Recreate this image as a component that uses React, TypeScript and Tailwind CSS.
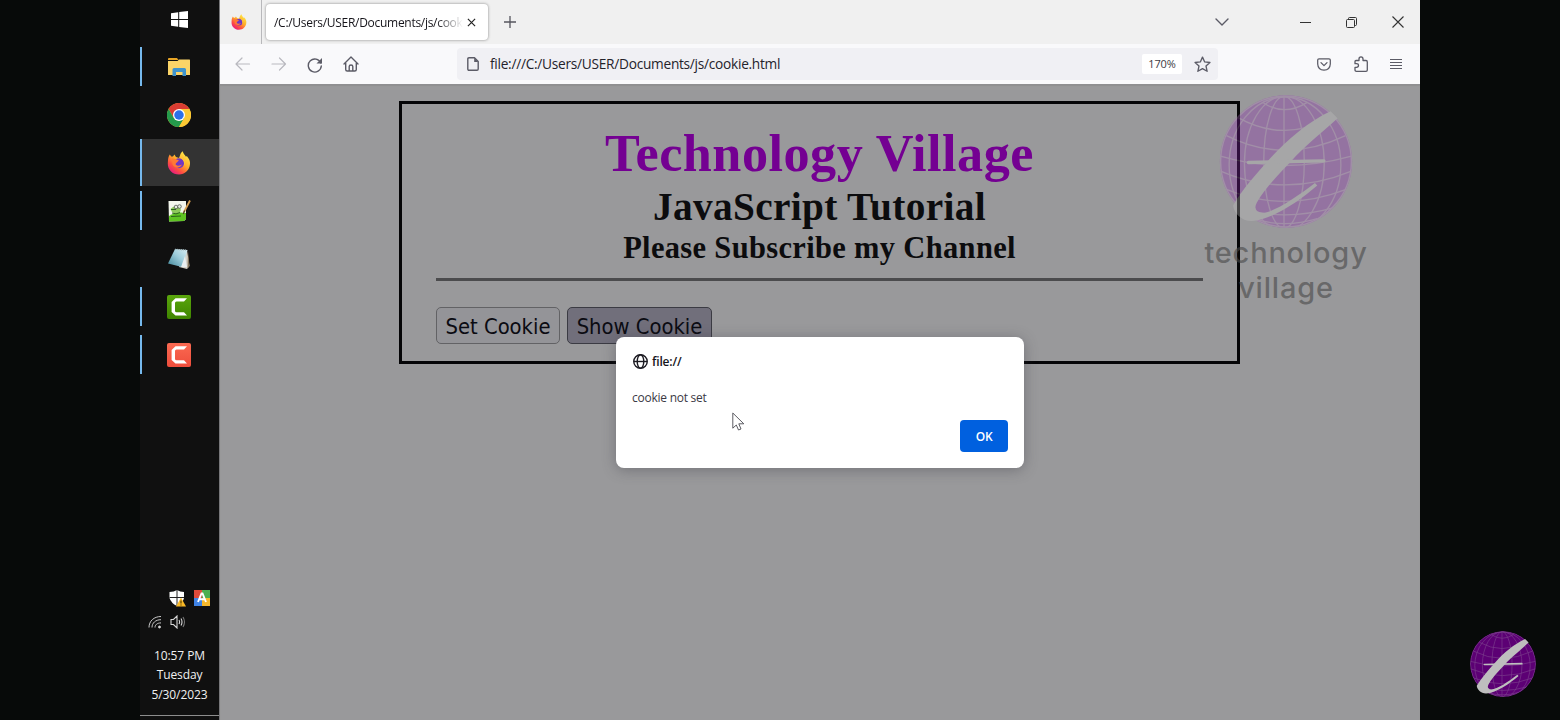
import React from "react";

type P = { className?: string };

function Globe({ className = "", fill, line, mark, o = 1 }: { className?: string; fill: string; line: string; mark: string; o?: number }) {
  const id = "globe" + fill.slice(1);
  return (
    <svg viewBox="11 6 400 400" className={className} style={{ opacity: o }}>
      <clipPath id={id}>
        <circle cx="211" cy="206" r="199" />
      </clipPath>
      <circle cx="211" cy="206" r="199" fill={fill} />
      <g clipPath={`url(#${id})`} fill="none" stroke={line} strokeWidth="4">
        <circle cx="211" cy="206" r="197" strokeWidth="5" />
        <path d="M205 8V404" />
        <ellipse cx="205" cy="208" rx="61" ry="198" />
        <ellipse cx="206" cy="212" rx="120" ry="202" />
        <ellipse cx="208" cy="216" rx="168" ry="204" />
        <path d="M140 28Q205 72 275 28M68 75Q205 150 345 75M32 128Q205 216 390 128M14 190Q205 246 408 190M14 235Q205 318 408 235M32 290Q205 362 392 290M68 345Q205 388 355 345M115 378Q205 408 305 378" />
      </g>
      <path fill={mark} d="M345 55C280 85 215 140 165 195C120 245 80 290 52 338C54 360 76 385 108 385C175 378 250 325 305 278L298 271C245 312 175 360 140 360C118 359 115 345 123 330C155 275 200 235 240 190C285 145 330 110 366 76Z" />
      <path d="M98 209L325 204" stroke={mark} strokeWidth="10" strokeLinecap="round" />
    </svg>
  );
}

function Firefox({ className = "" }: P) {
  return (
    <svg viewBox="0 0 24 24" className={className}>
      <defs>
        <linearGradient id="ff" x1="0.85" y1="0.1" x2="0.2" y2="1">
          <stop offset="0" stopColor="#ffe94a" />
          <stop offset=".4" stopColor="#ffae2a" />
          <stop offset=".7" stopColor="#ff5040" />
          <stop offset="1" stopColor="#e2138a" />
        </linearGradient>
      </defs>
      <path fill="url(#ff)" d="M1 9C1.200 6.500 2 5 2.800 3.600L4.200 5.600L6 5.600L7.400 3.600L9 6L12 7L13 4.500C13.300 2.500 14.500 1 15.800.2C16 2.500 18 3.800 18.800 5.600L20 5.200C22.200 7.800 23.300 10 23 13C22.600 19.300 17.800 23.500 12 23.500C5.500 23.500.5 18.500.8 12.200Z" />
      <circle cx="12" cy="12.200" r="5" fill="#7038c4" />
      <path d="M5 7.500L8.500 8L12 9.500C10.500 11.300 8.700 11.500 8.600 13.200C9.500 15 12.500 15.200 15 13.600C13.500 17.500 7.500 17.800 5.600 13.500Z" fill="#ff7a35" />
      <path d="M13 7C16.500 8 18 11.500 16.800 15C20 11 18 7 15 5.500Z" fill="#ffc23a" />
    </svg>
  );
}

function Windows() {
  return (
    <svg viewBox="0 0 17 17" className="h-[17px] w-[17px]" fill="#fff">
      <path d="M0 2.300L7.200 1.300V8H0ZM8.200 1.100L17 0V8H8.200ZM0 9H7.200V15.700L0 14.700ZM8.200 9H17V17L8.200 15.900Z" />
    </svg>
  );
}

function Explorer() {
  return (
    <svg viewBox="0 0 22 18" className="h-[18px] w-[22px]">
      <path d="M0 1Q0 0 1 0H9L10.500 2H0Z" fill="#e8a526" />
      <path d="M0 3H9.500L11 1.500H21.500Q22 1.500 22 2.500V17H0Z" fill="#fbd468" />
      <path d="M4.500 18V11.500Q4.500 10 6 10H16.500Q18 10 18 11.500V18H14.500V14H8V18Z" fill="#3f93cc" />
    </svg>
  );
}

function Chrome() {
  return (
    <svg viewBox="0 0 48 48" className="h-6 w-6">
      <circle cx="24" cy="24" r="24" fill="#fcc934" />
      <path d="M3.200 12A24 24 0 0 1 44.800 12H24L13.600 30Z" fill="#d93c32" />
      <path d="M3.200 12L13.600 30L34.400 30L24 48A24 24 0 0 1 3.200 12Z" fill="#249a4b" />
      <path d="M24 12H44.800A24 24 0 0 1 24 48L34.400 30Z" fill="#fcc934" />
      <circle cx="24" cy="24" r="12" fill="#fff" />
      <circle cx="24" cy="24" r="9.500" fill="#2c70e8" />
    </svg>
  );
}

function NotepadPlus() {
  return (
    <svg viewBox="0 0 24 24" className="h-6 w-6">
      <path d="M1.500 2H19V20L17 22L2 22.500Z" fill="#f3f6ec" />
      <path d="M2 17Q9 12 19 14V20L17 22L2 22.500Z" fill="#5fc423" />
      <path d="M3.500 10Q7 6 12 8Q15 10 13 13Q9 16 5 13Z" fill="#8dc95b" />
      <path d="M4 10.500H9M5 14Q9 16 13 13.500M4 17.500L14 17" stroke="#2c611b" strokeWidth="1" fill="none" />
      <circle cx="9" cy="8" r="1.800" fill="#e4eede" stroke="#555" strokeWidth=".8" />
      <circle cx="12.500" cy="7.500" r="1.800" fill="#e4eede" stroke="#555" strokeWidth=".8" />
      <path d="M23 1.500L17 13" stroke="#d7a052" strokeWidth="1.800" />
      <path d="M17.600 11.500L16.300 15" stroke="#4c3b25" strokeWidth="1.200" />
    </svg>
  );
}

function Notepad() {
  return (
    <svg viewBox="0 0 24 24" className="h-6 w-6">
      <defs>
        <linearGradient id="np" x1="0" y1="1" x2="1" y2="0">
          <stop offset="0" stopColor="#3e8497" />
          <stop offset=".55" stopColor="#9dcddb" />
          <stop offset="1" stopColor="#d9eef2" />
        </linearGradient>
      </defs>
      <path d="M20 3L22.500 19L20 22L12 20Z" fill="#d6d2c8" />
      <path d="M21 4L22.500 19L20.500 21.500Z" fill="#84745b" />
      <path d="M8 2L20.500 3L15 20L1 16.500Z" fill="url(#np)" />
      <path d="M18 9L20 20L14 20Z" fill="#e9eff0" />
      <path d="M8 2.300L20 3.200" stroke="#a4b8bd" strokeWidth="1.300" strokeDasharray="1 1" />
    </svg>
  );
}

function Camtasia({ top, bottom, id }: { top: string; bottom: string; id: string }) {
  return (
    <svg viewBox="0 0 24 24" className="h-6 w-6">
      <defs>
        <linearGradient id={id} x2="0" y2="1">
          <stop stopColor={top} />
          <stop offset="1" stopColor={bottom} />
        </linearGradient>
      </defs>
      <rect width="24" height="24" rx="2" fill={`url(#${id})`} />
      <path d="M20 3.300L17 6.500H9.500Q8 6.500 8 8V15.800Q8 17.300 9.500 17.300H17L20 20.500H8.500L4.600 17V7L8.500 3.300Z" fill="#fff" />
    </svg>
  );
}

function TaskItem({ children, bar, active }: { children: React.ReactNode; bar?: boolean; active?: boolean }) {
  return (
    <div className="h-12 shrink-0">
      <div className={`flex h-[47px] items-center ${active ? "bg-[#333333]" : ""}`}>
        <div className={`w-[2px] shrink-0 ${active ? "h-[47px]" : "h-[39px]"} ${bar ? "bg-[#76b9ed]" : ""}`} />
        <div className="flex flex-1 justify-center pr-[3px]">{children}</div>
      </div>
    </div>
  );
}

function Taskbar() {
  return (
    <aside className="flex h-full w-[79px] flex-col bg-[#101010]">
      <div className="flex h-[43px] shrink-0 items-center justify-center pb-[4px]">
        <Windows />
      </div>
      <TaskItem bar><Explorer /></TaskItem>
      <TaskItem><Chrome /></TaskItem>
      <TaskItem bar active><Firefox className="h-6 w-6" /></TaskItem>
      <TaskItem bar><NotepadPlus /></TaskItem>
      <TaskItem><Notepad /></TaskItem>
      <TaskItem bar><Camtasia id="cg" top="#5aa60c" bottom="#3f8500" /></TaskItem>
      <TaskItem bar><Camtasia id="cr" top="#fb6a52" bottom="#ee4d3c" /></TaskItem>
      <div className="flex-1" />
      <div className="flex justify-end gap-2 pr-[9px]">
        <svg viewBox="0 0 17 17" className="h-[17px] w-[17px]">
          <path d="M8 0Q11 2 15 2V8Q14 13 8 16Q2 13 .5 8V2Q5 2 8 0Z" fill="#fff" />
          <path d="M8 0V16M.5 7.500H15" stroke="#222" strokeWidth="1" />
          <path d="M12 7.500L17 16.500H7Z" fill="#f8b826" />
          <path d="M12 10.500V13.500M12 14.500V15.500" stroke="#4a3500" strokeWidth="1.100" />
        </svg>
        <svg viewBox="0 0 16 16" className="h-4 w-4">
          <path d="M0 0H8V8H0Z" fill="#de4b3b" />
          <path d="M8 0H16V8H8Z" fill="#4caf50" />
          <path d="M0 8H8V16H0Z" fill="#3f83e6" />
          <path d="M8 8H16V16H8Z" fill="#f5b82c" />
          <path d="M4 12L7.500 3.500H8.500L12 12M5.300 9.300H10.700" stroke="#fff" strokeWidth="1.900" fill="none" />
        </svg>
      </div>
      <div className="mt-[8px] flex gap-[8px] pl-2">
        <svg viewBox="0 0 14 14" className="h-[14px] w-[14px]" fill="none" stroke="#c8c8c8" strokeWidth="1">
          <path d="M1 12.500C1 6 6 1.500 13 1.500M4 12.500C4 8 7.500 4.700 13 4.700M7 12.500C7 10 9 7.900 13 7.900" />
          <circle cx="11.500" cy="12" r="1" fill="#fff" />
        </svg>
        <svg viewBox="0 0 16 14" className="h-[14px] w-4" fill="none" stroke="#d8d8d8" strokeWidth="1.100">
          <path d="M1 4.500H3.500L7 1V13L3.500 9.500H1ZM9 5Q10.200 7 9 9M11 3.500Q13 7 11 10.500" />
          <path d="M13 2Q16 7 13 12" stroke="#777" />
        </svg>
      </div>
      <div className="mt-[17px] text-center font-['Open_Sans','Noto_Sans',sans-serif] text-[12px] leading-[19.5px] tracking-[-0.1px] text-[#f0f0f0]">
        <div>10:57 PM</div>
        <div>Tuesday</div>
        <div>5/30/2023</div>
      </div>
      <div className="mt-[11px] h-[2px] shrink-0 border-t border-[#8d8d8d]" />
      <div className="h-[3px] shrink-0" />
    </aside>
  );
}

const stroke = { fill: "none", stroke: "#5b5b66", strokeWidth: 1.4, strokeLinecap: "round", strokeLinejoin: "round" } as const;

function TabStrip() {
  return (
    <div className="flex h-11 shrink-0 items-center bg-[#f0f0f0]">
      <div className="flex h-full w-[42px] items-center border-r border-[#b8b8bb] pl-[11px]">
        <Firefox className="h-4 w-4" />
      </div>
      <div className="ml-[4px] flex h-[36px] w-[222px] items-center rounded-[4px] bg-white pl-[8px] shadow-[0_0_3px_rgba(0,0,0,0.45)]">
        <div className="w-[189px] whitespace-nowrap bg-linear-to-r from-[#15141a] from-86% to-transparent bg-clip-text pt-px font-['Open_Sans','Noto_Sans',sans-serif] text-[12px] tracking-[-0.29px] text-transparent">
          /C:/Users/USER/Documents/js/cook
        </div>
        <svg viewBox="0 0 10 10" className="ml-[4px] h-[9px] w-[9px] shrink-0"><path d="M1 1L9 9M9 1L1 9" stroke="#222" strokeWidth="1.300" /></svg>
      </div>
      <svg viewBox="0 0 12 12" className="ml-[16px] h-3 w-3"><path d="M6 0V12M0 6H12" stroke="#55555d" strokeWidth="1.300" /></svg>
      <div className="flex-1" />
      <svg viewBox="0 0 14 8" className="mr-[71px] h-2 w-[14px]"><path d="M1 1L7 7L13 1" {...stroke} /></svg>
      <svg viewBox="0 0 11 11" className="mr-[35px] h-[11px] w-[11px]"><path d="M0 5.500H11" stroke="#333" /></svg>
      <svg viewBox="0 0 11 11" className="mr-[35px] h-[11px] w-[11px]" fill="none" stroke="#333"><rect x=".5" y="2.500" width="8" height="8" rx="1" /><path d="M2.500 2.500V1.500Q2.500.5 3.500.5H9.500Q10.500.5 10.500 1.500V7.500Q10.500 8.500 9.500 8.500H8.500" /></svg>
      <svg viewBox="0 0 12 12" className="mr-[16px] h-3 w-3"><path d="M.5.5L11.500 11.500M11.500.5L.5 11.500" stroke="#333" strokeWidth="1.100" /></svg>
    </div>
  );
}

function NavBar() {
  return (
    <div className="flex h-10 shrink-0 items-center bg-[#f9f9fb]">
      <svg viewBox="0 0 16 14" className="ml-[15px] h-[14px] w-4"><path d="M14.500 7H1M7 1L1 7L7 13" {...stroke} stroke="#b9b9bf" strokeWidth="1.200" /></svg>
      <svg viewBox="0 0 16 14" className="ml-5 h-[14px] w-4"><path d="M1 7H14.500M8.500 1L14.500 7L8.500 13" {...stroke} stroke="#b9b9bf" strokeWidth="1.200" /></svg>
      <svg viewBox="0 0 16 16" className="ml-5 mt-px h-4 w-4"><path d="M13.800 6A6.500 6.500 0 1 0 14.300 9" {...stroke} /><path d="M15 1V6.500H9.500Z" fill="#5b5b66" /></svg>
      <svg viewBox="0 0 16 16" className="ml-[20px] h-4 w-4"><path d="M1 8L8 1L15 8M2.700 7V13.500Q2.700 15 4.200 15H11.800Q13.300 15 13.300 13.500V7M6.200 15V10.500Q6.200 9 8 9T9.800 10.500V15" {...stroke} /></svg>
      <div className="ml-[98px] flex h-8 w-[761px] items-center rounded-[4px] bg-[#f0f0f4]">
        <svg viewBox="0 0 12 14" className="ml-[10px] h-[14px] w-3"><path d="M2 .8H7.500L11.200 4.500V12Q11.200 13.200 10 13.200H2Q.8 13.200.8 12V2Q.8.8 2 .8Z" {...stroke} /><path d="M7.200.8L11.200 5H7.200Z" fill="#5b5b66" /></svg>
        <div className="ml-[11px] flex-1 whitespace-nowrap pt-px font-['Open_Sans','Noto_Sans',sans-serif] text-[13.7px] tracking-[-0.27px] text-[#24232b]">file:///C:/Users/USER/Documents/js/cookie.html</div>
        <div className="flex h-5 w-10 items-center justify-center rounded-[2px] bg-white font-['Open_Sans','Noto_Sans',sans-serif] text-[11px] tracking-[-0.15px] text-[#3c3b44]">170%</div>
        <svg viewBox="0 0 18 18" className="ml-3 mr-[7px] h-[17px] w-[17px]"><path d="M9 1.200L11.300 6.300L16.900 6.900L12.700 10.600L13.900 16.200L9 13.300L4.100 16.200L5.300 10.600L1.100 6.900L6.700 6.300Z" {...stroke} /></svg>
      </div>
      <div className="flex-1" />
      <svg viewBox="0 0 14 13" className="h-[13px] w-[14px]"><path d="M2 .8H12Q13.300.8 13.300 2V6Q13 12 7 12.200Q1 12 .7 6V2Q.7.8 2 .8ZM4 4.600L7 7.600L10 4.600" {...stroke} strokeWidth="1.250" /></svg>
      <svg viewBox="0 0 16 16" className="ml-[22px] h-4 w-4"><path d="M2 5.500Q2 4.500 3 4.500H6V3Q6 .8 8 .8T10 3V4.500H13Q14.300 4.500 14.300 6V14Q14.300 15.300 13 15.300H3.500Q2 15.300 2 14V11.300H3.500Q5.500 11.300 5.500 9.500T3.500 7.700H2Z" {...stroke} strokeWidth="1.300" /></svg>
      <svg viewBox="0 0 12 12" className="ml-[21px] mr-[18px] h-3 w-3"><path d="M0 1.500H12M0 4.500H12M0 7.500H12M0 10.500H12" stroke="#5b5b66" strokeWidth="1.200" /></svg>
    </div>
  );
}

function Dialog() {
  return (
    <div className="absolute left-[396px] top-[252.5px] flex h-[131.500px] w-[408px] flex-col rounded-[8px] bg-white px-4 pt-4 font-['Open_Sans','Noto_Sans',sans-serif] text-[12px] text-[#15141a] shadow-[0_2px_14px_rgba(58,57,68,0.4)]">
      <div className="flex h-[18px] items-center gap-1 font-semibold tracking-[-0.15px]">
        <svg viewBox="0 0 16 16" className="ml-px h-[15px] w-[15px]" fill="none" stroke="#1c1b22" strokeWidth="1.500"><circle cx="8" cy="8" r="7.200" /><ellipse cx="8" cy="8" rx="3.500" ry="7.200" /><path d="M1 8H15" /></svg>
        <span className="pt-px">file://</span>
      </div>
      <div className="mt-[18px] h-[18px] leading-[18px] tracking-[-0.25px] text-[#3a3944]">cookie not set</div>
      <button className="mt-[13.500px] h-8 w-12 self-end rounded-[4px] bg-[#0060df] pt-px font-semibold tracking-[-0.2px] text-white">OK</button>
      <svg viewBox="0 0 13 19" className="absolute left-[116px] top-[75px] h-[19px] w-[13px]"><path d="M.8 1V16.200L4.300 13L6.500 18L9 17L6.800 11.800H11.800Z" fill="#fff" stroke="#4c4c52" strokeWidth=".9" /></svg>
    </div>
  );
}

export default function App() {
  return (
    <div className="flex h-[720px] w-[1560px] overflow-hidden bg-[#070a09]">
      <div className="w-[140px] shrink-0" />
      <Taskbar />
      <main className="flex w-[1201px] flex-col border-l border-[#77777a]">
        <TabStrip />
        <NavBar />
        <section className="relative flex-1 overflow-hidden bg-[#99999b] shadow-[inset_0_2px_1px_#8f8f91]">
          <div className="ml-[179px] mt-[17px] h-[263px] w-[841px] border-[3px] border-[#050507] px-[34px] pt-[19px]">
            <header className="text-center font-['Liberation_Serif',serif] font-bold text-[#0c0c0e]">
              <h1 className="text-[52.2px] leading-[60px] tracking-[0.5px] text-[#740092]">Technology Village</h1>
              <h2 className="mt-[2px] text-[39.3px] leading-[45px] tracking-[0.35px]">JavaScript Tutorial</h2>
              <h3 className="mt-px text-[30.5px] leading-[35px] tracking-[0.33px]">Please Subscribe my Channel</h3>
            </header>
            <div className="mt-[12px] h-[2.5px] bg-[#4b4b4d]" />
            <div className="mt-[26.500px] flex gap-[7px] font-['DejaVu_Sans_Condensed','DejaVu_Sans',sans-serif] text-[21.8px] text-[#0b0b12]">
              <button className="h-[37px] w-[124px] whitespace-nowrap rounded-[5px] border border-[#626265] bg-[#949498] pt-[3px]">Set Cookie</button>
              <button className="h-[37px] w-[145px] whitespace-nowrap rounded-[5px] border border-[#3b3b43] bg-[#716f7b] pt-[3px]">Show Cookie</button>
            </div>
          </div>
          <div className="absolute left-[965px] top-[11px] flex w-[202px] flex-col items-center">
            <Globe className="h-[133px] w-[134px]" fill="#8c25b0" line="#b47cc2" mark="#c2c2c2" o={0.32} />
            <div className="mt-[7px] text-center font-['Inter',sans-serif] text-[29px] font-medium leading-[35px] tracking-[0.8px] text-[#484848]/60">
              <div>technology</div>
              <div>village</div>
            </div>
          </div>
          <Dialog />
        </section>
      </main>
      <div className="flex flex-1 items-end justify-end pb-[23px] pr-6">
        <Globe className="h-[66px] w-[66px]" fill="#5c0074" line="#7b3f8d" mark="#bebebe" />
      </div>
    </div>
  );
}
